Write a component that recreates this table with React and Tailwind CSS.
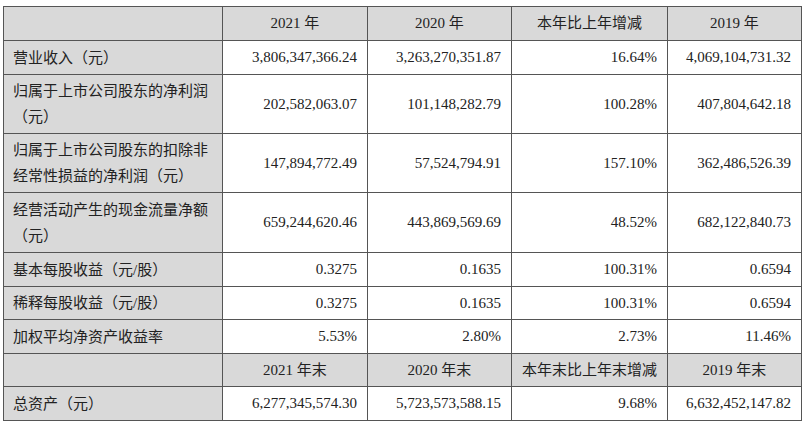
import React from "react";

const rows = [
  { label: ["营业收入（元）"], v: ["3,806,347,366.24", "3,263,270,351.87", "16.64%", "4,069,104,731.32"], h: "h-[34px]" },
  { label: ["归属于上市公司股东的净利润", "（元）"], v: ["202,582,063.07", "101,148,282.79", "100.28%", "407,804,642.18"], h: "h-[59px]" },
  { label: ["归属于上市公司股东的扣除非", "经常性损益的净利润（元）"], v: ["147,894,772.49", "57,524,794.91", "157.10%", "362,486,526.39"], h: "h-[59px]" },
  { label: ["经营活动产生的现金流量净额", "（元）"], v: ["659,244,620.46", "443,869,569.69", "48.52%", "682,122,840.73"], h: "h-[60px]" },
  { label: ["基本每股收益（元/股）"], v: ["0.3275", "0.1635", "100.31%", "0.6594"], h: "h-[34px]" },
  { label: ["稀释每股收益（元/股）"], v: ["0.3275", "0.1635", "100.31%", "0.6594"], h: "h-[33px]" },
  { label: ["加权平均净资产收益率"], v: ["5.53%", "2.80%", "2.73%", "11.46%"], h: "h-[34px]" },
];

function HeaderRow({ cells, h }) {
  return (
    <tr className={h}>
      <td className="border border-[#555] bg-[#d9d9d9]"></td>
      {cells.map((c, i) => (
        <td key={i} className="border border-[#555] bg-[#d9d9d9] text-center align-middle">
          {c}
        </td>
      ))}
    </tr>
  );
}

function DataRow({ r }) {
  return (
    <tr className={r.h}>
      <td className="border border-[#555] bg-[#d9d9d9] pl-[9px] align-middle leading-[26px]">
        {r.label.map((l, i) => (
          <div key={i}>{l}</div>
        ))}
      </td>
      {r.v.map((c, i) => (
        <td key={i} className="border border-[#555] bg-white text-right pr-[10px] align-middle">
          {c}
        </td>
      ))}
    </tr>
  );
}

export default function App() {
  return (
    <div
      className="w-[807px] h-[424px] bg-white pt-[6px] pl-[3px] text-[15px] text-[#222]"
      style={{ fontFamily: '"Liberation Serif", "Noto Sans CJK SC", serif' }}
    >
      <table className="table-fixed border-collapse w-[798px]">
        <colgroup>
          <col className="w-[219px]" />
          <col className="w-[145px]" />
          <col className="w-[144px]" />
          <col className="w-[156px]" />
          <col className="w-[134px]" />
        </colgroup>
        <tbody>
          <HeaderRow cells={["2021 年", "2020 年", "本年比上年增减", "2019 年"]} h="h-[34px]" />
          {rows.map((r, i) => (
            <DataRow key={i} r={r} />
          ))}
          <HeaderRow cells={["2021 年末", "2020 年末", "本年末比上年末增减", "2019 年末"]} h="h-[33px]" />
          <DataRow
            r={{
              label: ["总资产（元）"],
              v: ["6,277,345,574.30", "5,723,573,588.15", "9.68%", "6,632,452,147.82"],
              h: "h-[34px]",
            }}
          />
        </tbody>
      </table>
    </div>
  );
}
